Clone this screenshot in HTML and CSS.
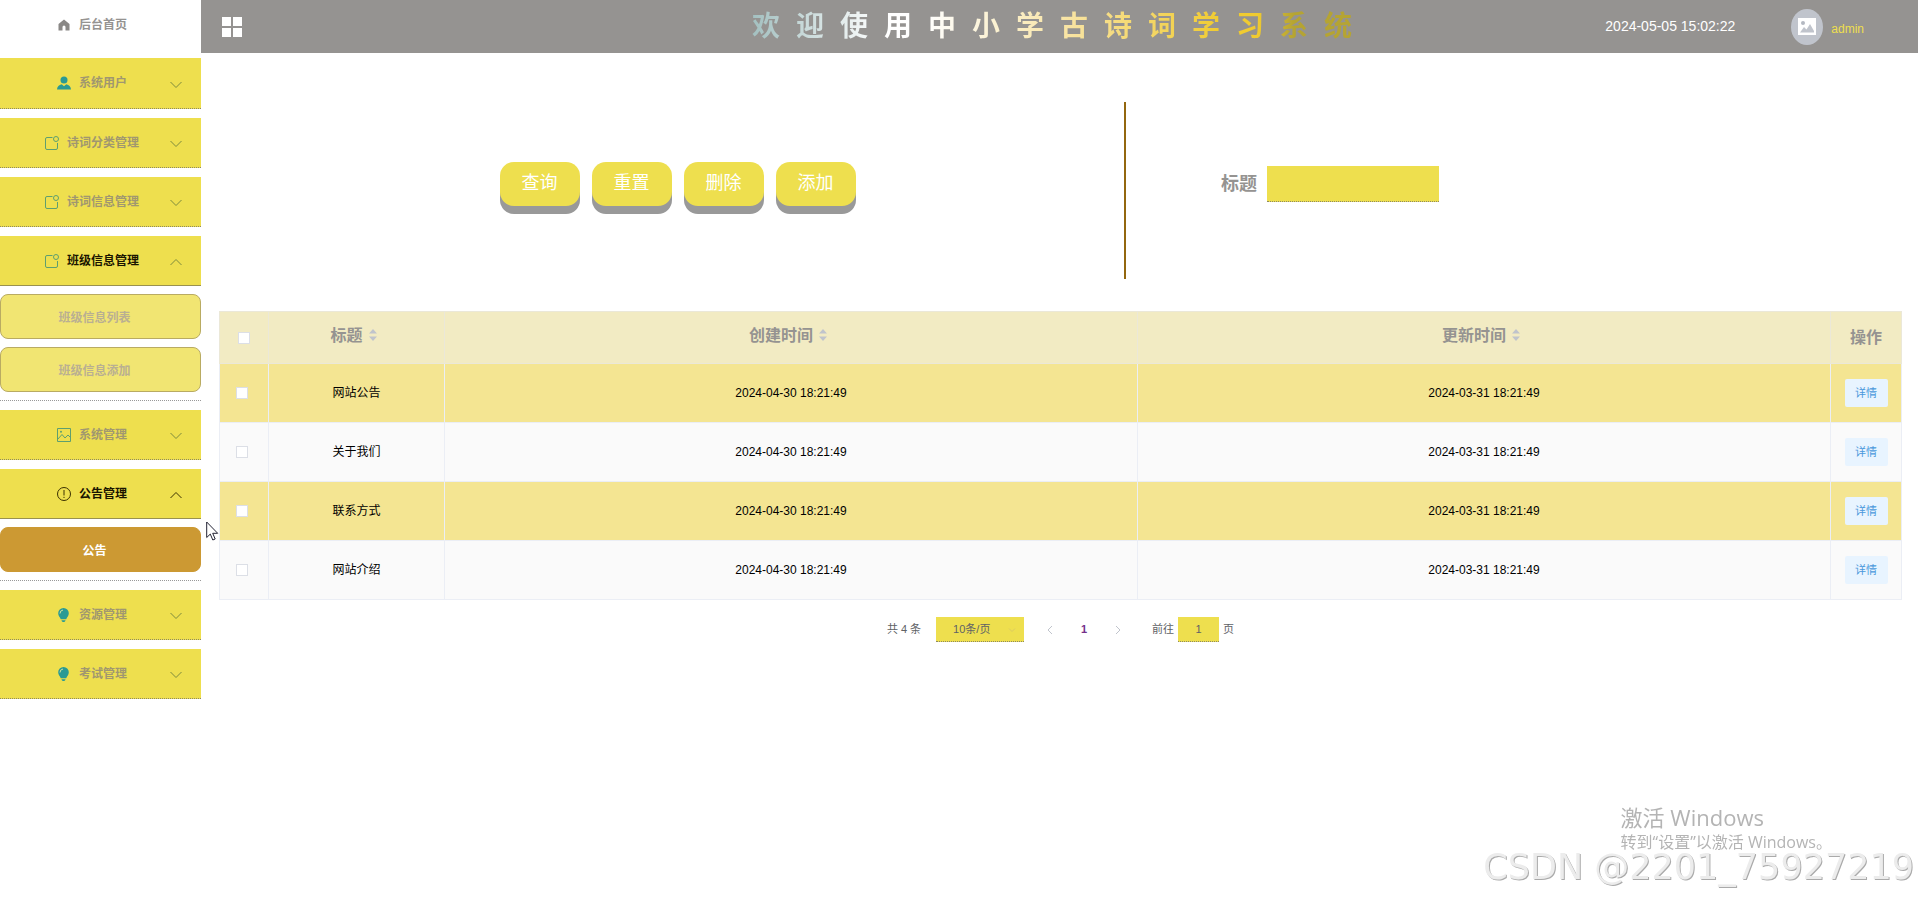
FILE: index.html
```html
<!DOCTYPE html>
<html lang="zh-CN">
<head>
<meta charset="utf-8">
<title>中小学古诗词学习系统</title>
<link rel="stylesheet" href="styles.css">
</head>
<body>
<svg class="sprite" aria-hidden="true">
  <symbol id="down" viewBox="0 0 12 12"><path d="M.5 3 6 8.500 11.500 3" fill="none" stroke="currentColor"/></symbol>
  <symbol id="up" viewBox="0 0 12 12"><path d="M.5 9 6 3.500 11.500 9" fill="none" stroke="currentColor"/></symbol>
  <symbol id="note" viewBox="0 0 14 14"><path d="M7.500 1.500H2a1.500 1.500 0 0 0-1.500 1.500v9A1.500 1.500 0 0 0 2 13.500h9a1.500 1.500 0 0 0 1.500-1.500V7" fill="none" stroke="currentColor"/><circle cx="11" cy="3" r="2.500" fill="none" stroke="currentColor"/></symbol>
  <symbol id="user" viewBox="0 0 14 14"><circle cx="7" cy="4" r="3.500" fill="currentColor"/><path d="M0 13.500c.2-3 2-4.500 4.700-5.200L7 10.200l2.300-1.900c2.700.7 4.500 2.200 4.700 5.200z" fill="currentColor"/></symbol>
  <symbol id="picture" viewBox="0 0 14 14"><path d="M.5.5h13v13H.5zM.5 11.500 5 6.500l3 3.500 3-3 2.500 2.500" fill="none" stroke="currentColor"/><circle cx="4" cy="3.800" r="1" fill="currentColor"/></symbol>
  <symbol id="warn" viewBox="0 0 14 14"><circle cx="7" cy="7" r="6.500" fill="none" stroke="currentColor"/><path d="M7 3v5.500M7 9.800V11" stroke="currentColor"/></symbol>
  <symbol id="bulb" viewBox="0 0 14 14"><path d="M6.500 0a5.300 5.300 0 0 1 5.300 5.300c0 2.700-1.800 3.700-2.600 6H3.800c-.8-2.300-2.600-3.300-2.600-6A5.300 5.300 0 0 1 6.500 0zM4.500 12.200h4c0 2.400-4 2.400-4 0z" fill="currentColor"/><path d="M3 5.500A3.500 3.500 0 0 1 6 2" fill="none" stroke="#cfe3a0"/></symbol>
  <symbol id="sort" viewBox="0 0 8 12"><path d="M4 0 8 4.500H0zM4 12 8 7.500H0z" fill="currentColor"/></symbol>
</svg>
<div class="layout">
  <nav class="sidebar">
    <a class="home" href="#"><svg class="icon" viewBox="0 0 14 14"><path d="M7 1.500 1.500 6v6.500h4V9a1.500 1.500 0 0 1 3 0v3.500h4V6z" fill="currentColor"/></svg>后台首页</a>
    <ul class="menu">
      <li><button class="item" type="button"><span class="label"><svg class="icon solid"><use href="#user"/></svg>系统用户</span><svg class="arrow"><use href="#down"/></svg></button></li>
      <li><button class="item" type="button"><span class="label"><svg class="icon"><use href="#note"/></svg>诗词分类管理</span><svg class="arrow"><use href="#down"/></svg></button></li>
      <li><button class="item" type="button"><span class="label"><svg class="icon"><use href="#note"/></svg>诗词信息管理</span><svg class="arrow"><use href="#down"/></svg></button></li>
      <li class="open"><button class="item" type="button"><span class="label"><svg class="icon"><use href="#note"/></svg>班级信息管理</span><svg class="arrow"><use href="#up"/></svg></button>
        <div class="submenu"><a href="#">班级信息列表</a><a href="#">班级信息添加</a></div></li>
      <li><button class="item" type="button"><span class="label"><svg class="icon"><use href="#picture"/></svg>系统管理</span><svg class="arrow"><use href="#down"/></svg></button></li>
      <li class="open current"><button class="item" type="button"><span class="label"><svg class="icon"><use href="#warn"/></svg>公告管理</span><svg class="arrow"><use href="#up"/></svg></button>
        <div class="submenu"><a class="active" href="#">公告</a></div></li>
      <li><button class="item" type="button"><span class="label"><svg class="icon solid"><use href="#bulb"/></svg>资源管理</span><svg class="arrow"><use href="#down"/></svg></button></li>
      <li><button class="item" type="button"><span class="label"><svg class="icon solid"><use href="#bulb"/></svg>考试管理</span><svg class="arrow"><use href="#down"/></svg></button></li>
    </ul>
  </nav>
  <div class="page">
    <header class="topbar">
      <button class="toggle" type="button" aria-label="菜单"><svg viewBox="0 0 20 20" width="20" height="20"><path d="M0 0h9v9H0zM11 0h9v9h-9zM0 11h9v9H0zM11 11h9v9h-9z" fill="#fff"/></svg></button>
      <h1>欢迎使用中小学古诗词学习系统</h1>
      <div class="account">
        <time>2024-05-05 15:02:22</time>
        <span class="avatar"><svg viewBox="0 0 18 17" width="18" height="17"><path d="M0 0h18v17H0z" fill="#fff"/><circle cx="5" cy="5" r="2" fill="#b4b9c2"/><path d="M2 14.500 6 9l2.500 2.500L12 6l4 7v1.500z" fill="#c0c4cc"/></svg></span>
        <span class="name">admin</span>
      </div>
    </header>
    <main>
      <form class="search">
        <div class="actions"><button type="button">查询</button><button type="button">重置</button><button type="button">删除</button><button type="button">添加</button></div>
        <div class="field"><label for="title">标题</label><input id="title" type="text"></div>
      </form>
      <table>
        <colgroup><col class="c-check"><col class="c-title"><col><col><col class="c-op"></colgroup>
        <thead><tr>
          <th class="check"><input type="checkbox" aria-label="全选"></th>
          <th class="sortable">标题<svg class="sort"><use href="#sort"/></svg></th>
          <th class="sortable">创建时间<svg class="sort"><use href="#sort"/></svg></th>
          <th class="sortable">更新时间<svg class="sort"><use href="#sort"/></svg></th>
          <th>操作</th>
        </tr></thead>
        <tbody>
          <tr><td class="check"><input type="checkbox" aria-label="选择网站公告"></td><td>网站公告</td><td>2024-04-30 18:21:49</td><td>2024-03-31 18:21:49</td><td><button type="button">详情</button></td></tr>
          <tr><td class="check"><input type="checkbox" aria-label="选择关于我们"></td><td>关于我们</td><td>2024-04-30 18:21:49</td><td>2024-03-31 18:21:49</td><td><button type="button">详情</button></td></tr>
          <tr><td class="check"><input type="checkbox" aria-label="选择联系方式"></td><td>联系方式</td><td>2024-04-30 18:21:49</td><td>2024-03-31 18:21:49</td><td><button type="button">详情</button></td></tr>
          <tr><td class="check"><input type="checkbox" aria-label="选择网站介绍"></td><td>网站介绍</td><td>2024-04-30 18:21:49</td><td>2024-03-31 18:21:49</td><td><button type="button">详情</button></td></tr>
        </tbody>
      </table>
      <div class="pager">
        <span>共 4 条</span>
        <span class="size"><select aria-label="每页条数"><option>10条/页</option></select><svg viewBox="0 0 8 8" width="8" height="8"><path d="M1 2.500 4 5.500l3-3" fill="none" stroke="#dccb62"/></svg></span>
        <div class="pages">
          <button type="button" aria-label="上一页"><svg viewBox="0 0 6 10" width="6" height="10"><path d="M5 1 1 5l4 4" fill="none" stroke="#c0c4cc"/></svg></button>
          <button type="button" class="on">1</button>
          <button type="button" aria-label="下一页"><svg viewBox="0 0 6 10" width="6" height="10"><path d="m1 1 4 4-4 4" fill="none" stroke="#c0c4cc"/></svg></button>
        </div>
        <label class="jump">前往<input type="text" value="1">页</label>
      </div>
    </main>
  </div>
</div>
<div class="activate"><p class="big">激活 Windows</p><p>转到“设置”以激活 Windows。</p></div>
<div class="mark">CSDN @2201_75927219</div>
<svg class="cursor" viewBox="0 0 13 20" width="13" height="20"><path d="M.7 1v15.500l3.600-3.400 2.500 5.900 2.400-1-2.500-5.700h5z" fill="#fff" stroke="#223"/></svg>
</body>
</html>
```
FILE: styles.css
```css
* { box-sizing: border-box; }
body { margin: 0; background: #fff; color: #000; font: 12px/1.5 "Liberation Sans", "Noto Sans CJK SC", sans-serif; }
button, input, select { font: inherit; margin: 0; border: 0; padding: 0; border-radius: 0; }
button { cursor: pointer; background: none; }
a { color: inherit; text-decoration: none; }
ul, p, h1 { margin: 0; padding: 0; list-style: none; }
.sprite { position: absolute; width: 0; height: 0; }
.layout { display: flex; min-height: 100vh; }

.sidebar { flex: 0 0 201px; font-weight: bold; color: #959391; }
.home { display: flex; align-items: center; justify-content: center; gap: 8px; height: 49px; margin-bottom: 9px; padding-right: 17px; }
.icon { width: 14px; height: 14px; flex: none; color: #5f9f6f; }
.home .icon { color: #8a8886; }
.icon.solid { color: #2a9a94; }
.menu { display: flex; flex-direction: column; gap: 9px; }
.item { display: flex; align-items: center; width: 100%; height: 50px; padding: 0 19px 0 14px; background: #eedf4e; border-bottom: 1px dotted #8f8a60; font-weight: bold; color: #a09770; }
.menu > li:first-child .item { height: 51px; }
.label { flex: 1; display: flex; align-items: center; justify-content: center; gap: 8px; }
.arrow { width: 12px; height: 12px; margin-top: 3px; color: #7d8a3c; }
.open .item { border-bottom: 1px solid #99914f; color: #1a1500; }
.current .icon, .current .arrow { color: #3a3000; }
.submenu { display: flex; flex-direction: column; gap: 8px; padding: 8px 0; border-bottom: 1px dotted #999; }
.submenu a { display: flex; align-items: center; justify-content: center; height: 45px; padding: 2px 12px 0 0; background: #f1e572; border: 1px solid #b9ab62; border-radius: 8px; color: #b9af92; }
.submenu .active { background: #cc9933; border-color: #cc9933; color: #fff; }

.page { flex: 1; min-width: 0; }
.topbar { display: grid; grid-template-columns: 1fr auto 1fr; align-items: center; height: 53px; padding: 0 54px 0 21px; background: #959391; }
.toggle { justify-self: start; display: flex; }
h1 { margin-left: 34px; font-size: 28px; line-height: 40px; letter-spacing: 16px; background: linear-gradient(90deg, #a3c0c0, #fff 21%, #fff 28%, #f8e3a0 52%, #f0cb30 76%, #f0cb30 82%, #b5a432 88%, #b5a432); background-clip: text; -webkit-background-clip: text; color: transparent; }
.account { justify-self: end; display: flex; align-items: center; font-size: 14px; color: #fff; }
.avatar { display: flex; align-items: center; justify-content: center; width: 32px; height: 36px; margin: 0 8px 0 56px; border-radius: 50%; background: #c0c4cc; }
.name { font-size: 12px; color: #eedf4e; padding-top: 4px; }

main { padding: 49px 16px 16px 18px; }
.search { display: grid; grid-template-columns: 907fr 776fr; height: 177px; margin-bottom: 32px; }
.actions { display: flex; align-items: center; justify-content: center; gap: 12px; padding: 0 0 13px 12px; border-right: 2px solid #93670f; }
.actions button { width: 80px; height: 44px; padding-bottom: 2px; border-radius: 14px; background: #eedf4e; box-shadow: 0 8px 0 #999; color: #fff; font-size: 18px; }
.field { display: flex; align-items: center; gap: 10px; padding: 0 0 13px 95px; }
.field label { font-size: 18px; font-weight: bold; color: #959391; }
.field input { width: 172px; height: 36px; padding: 0 10px; background: #eedf4e; border-bottom: 1px dotted #8f8a60; }

table { width: 100%; table-layout: fixed; border-collapse: collapse; text-align: center; }
.c-check { width: 49px; }
.c-title { width: 176px; }
.c-op { width: 71px; }
th, td { padding: 0; border: 1px solid #ebeef5; }
th { height: 52px; background: #f2ebc3; border-color: #ebe8d8; font-size: 16px; color: #959391; }
.sortable { padding: 0 6px 4px 0; }
td { height: 59px; background: #fafafa; }
tbody tr:nth-child(odd) td { background: #f4e592; }
.sort { width: 8px; height: 12px; margin-left: 6px; color: #c0c4cc; }
.check input { appearance: none; display: block; width: 12px; height: 12px; margin: 0 auto; background: #fff; border: 1px solid #dcdfe6; }
tbody .check input { margin-left: 16px; }
td button { width: 43px; height: 28px; background: #e8f4ff; border-radius: 2px; color: #4a98dc; font-size: 11px; }

.pager { display: flex; align-items: center; justify-content: center; margin-top: 17px; font-size: 11px; color: #606266; }
.size { position: relative; margin-left: 15px; }
.size select { appearance: none; display: block; width: 88px; height: 25px; padding-left: 17px; background: #eedf4e; border-bottom: 1px dotted #8f8a60; color: #606266; }
.size svg { position: absolute; right: 8px; top: 9px; }
.pages { display: flex; margin: 0 17px 0 9px; }
.pages button { display: flex; align-items: center; justify-content: center; width: 34px; height: 25px; }
.pages .on { font-weight: bold; color: #74308a; }
.jump { display: flex; align-items: center; gap: 4px; }
.jump input { width: 41px; height: 25px; background: #eedf4e; border-bottom: 1px dotted #8f8a60; text-align: center; color: #606266; }

.activate { position: fixed; right: 86px; bottom: 46px; font-family: "Open Sans", "Noto Sans CJK SC", sans-serif; font-size: 16px; line-height: 20px; color: #b4b4b4; }
.activate .big { font-size: 22px; line-height: 30px; }
.mark { position: fixed; right: 4px; bottom: 9px; font-family: "DejaVu Sans", sans-serif; font-size: 35px; line-height: 44px; color: #ececec; text-shadow: 1px 1px 0 #aaa; }
.cursor { position: fixed; left: 206px; top: 521px; }
```
